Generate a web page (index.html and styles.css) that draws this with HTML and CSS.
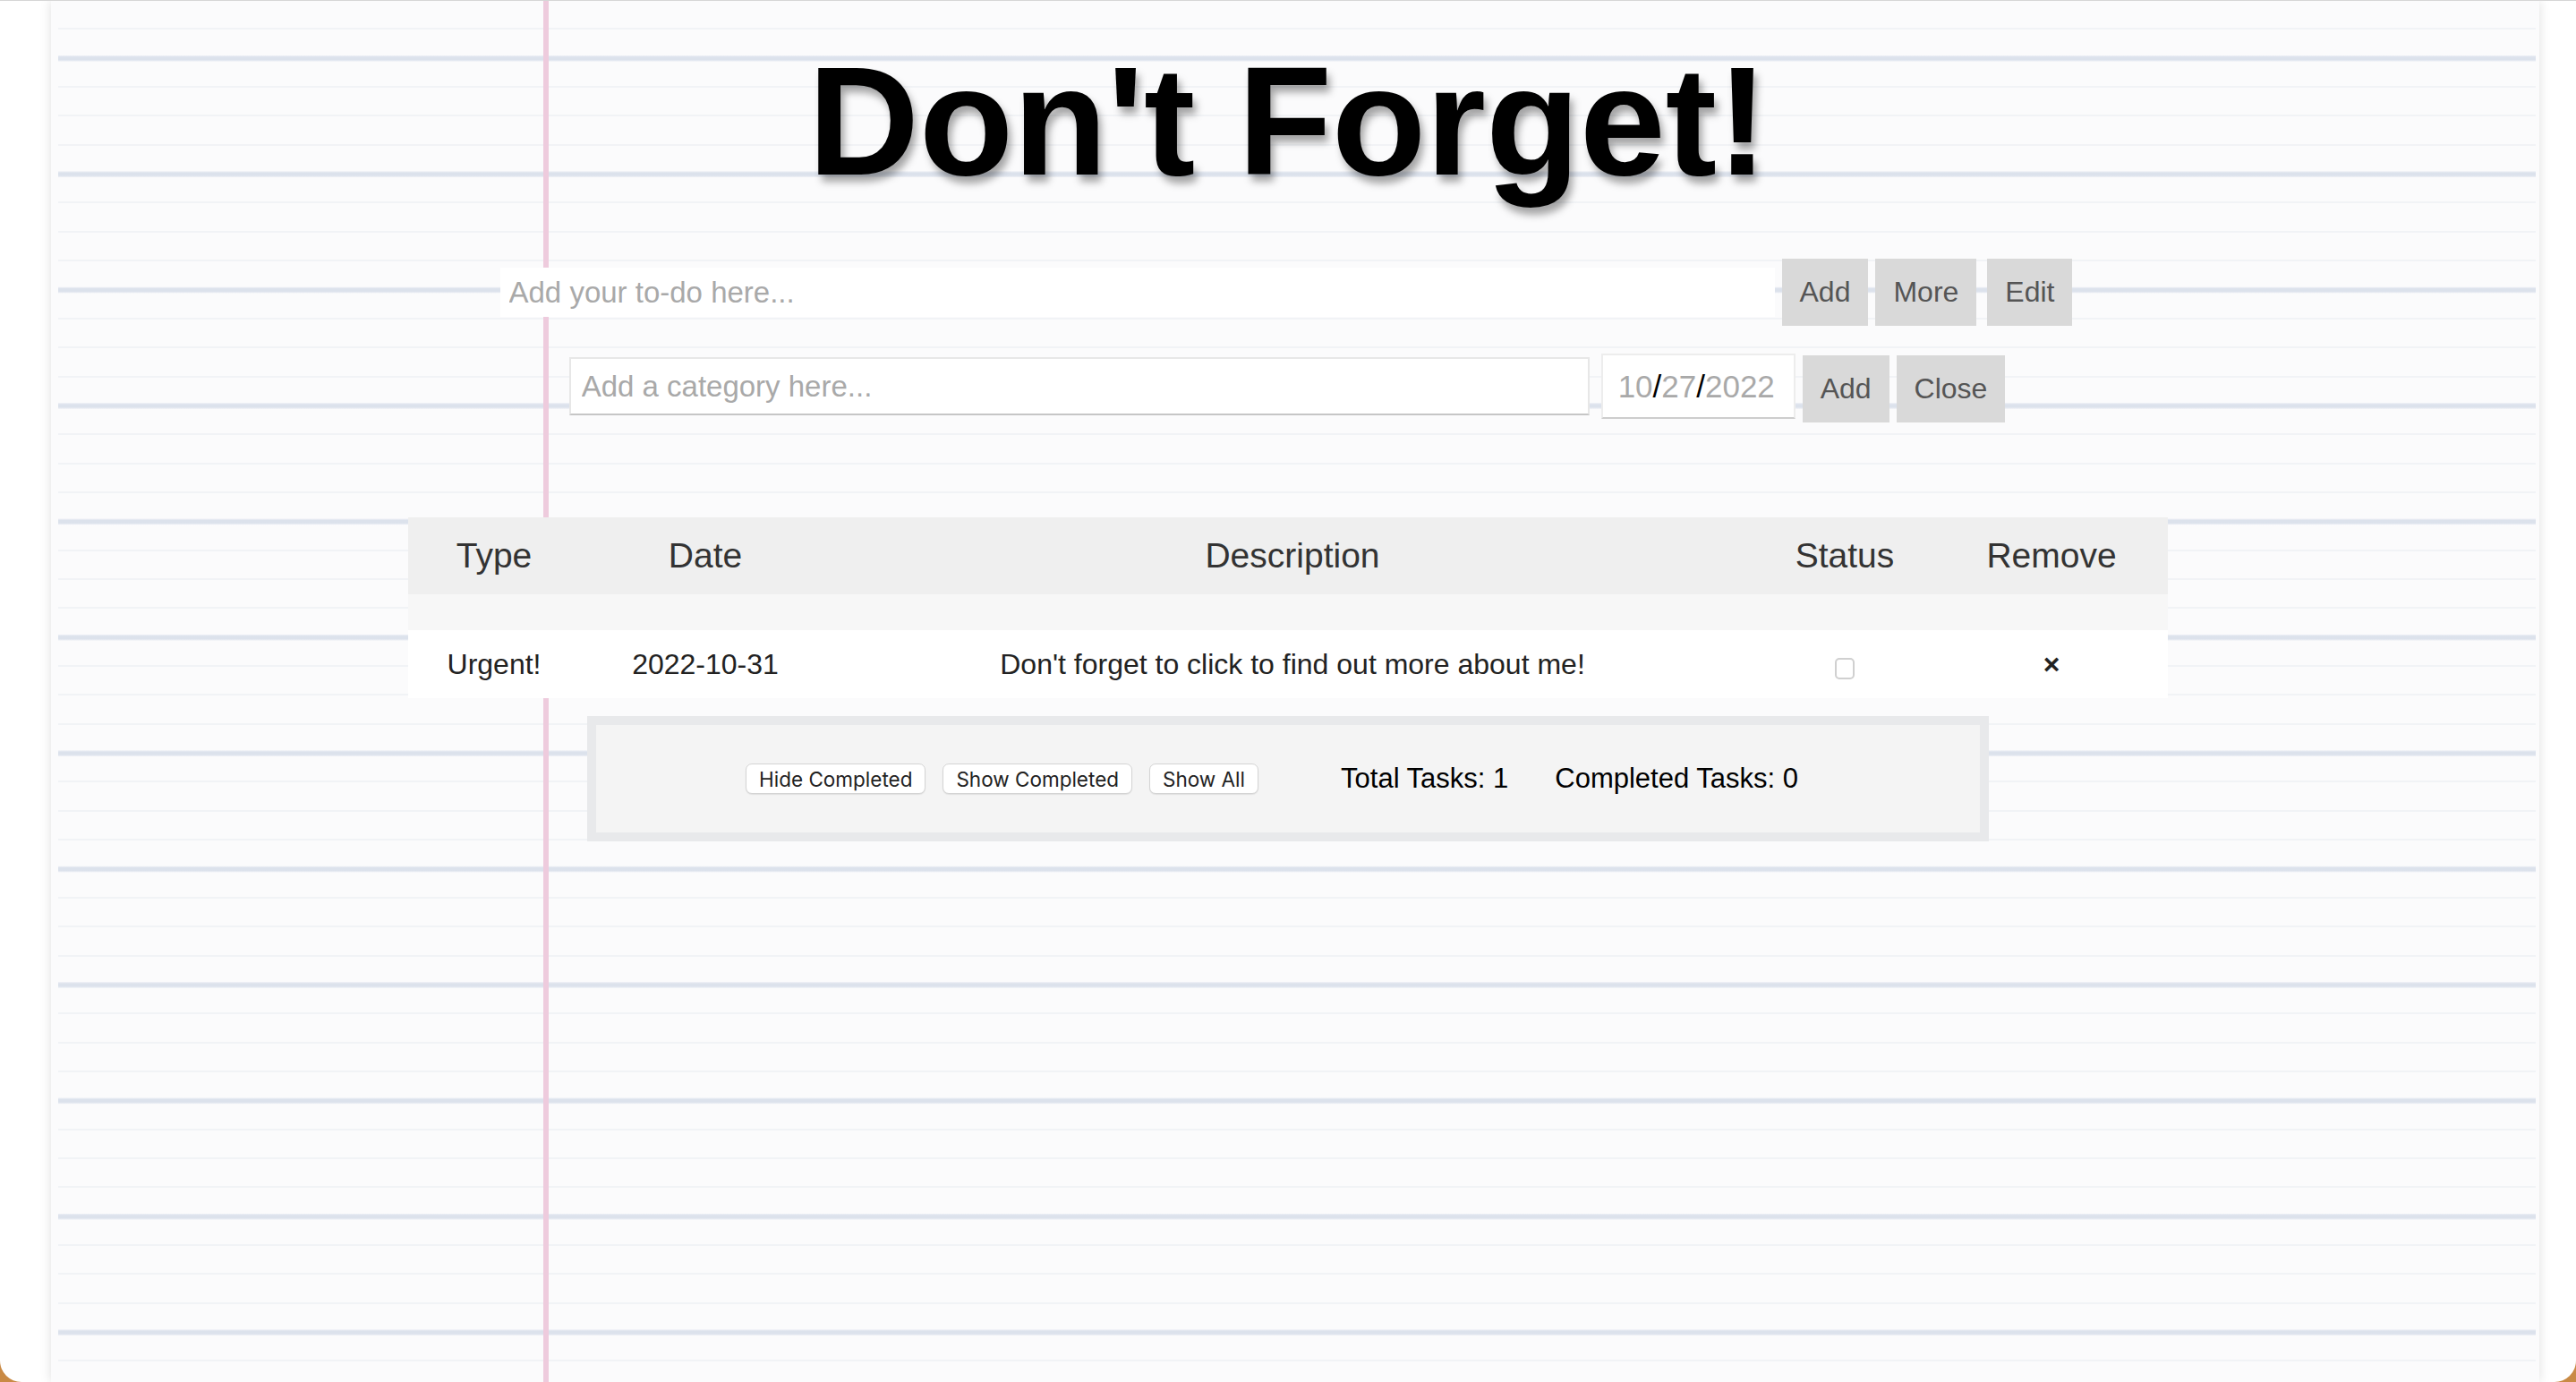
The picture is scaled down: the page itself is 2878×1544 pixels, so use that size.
FILE: index.html
```html
<!DOCTYPE html>
<html lang="en">
<head>
<meta charset="utf-8">
<title>Don't Forget!</title>
<link rel="stylesheet" href="styles.css">
</head>
<body>
<div class="paper">
  <div class="sheet">
    <h1 class="title">Don't Forget!</h1>

    <div class="entry-row">
      <input class="todo-input" type="text" placeholder="Add your to-do here...">
      <button class="btn">Add</button>
      <button class="btn">More</button>
      <button class="btn btn-edit">Edit</button>
    </div>

    <div class="entry-row entry-row-cat">
      <input class="cat-input" type="text" placeholder="Add a category here...">
      <div class="date-field"><span class="dpart">10</span><span class="dsep">/</span><span class="dpart">27</span><span class="dsep">/</span><span class="dpart">2022</span></div>
      <button class="btn btn-low">Add</button>
      <button class="btn btn-low">Close</button>
    </div>

    <table class="tasks">
      <colgroup>
        <col class="col-type">
        <col class="col-date">
        <col class="col-desc">
        <col class="col-status">
        <col class="col-remove">
      </colgroup>
      <thead>
        <tr>
          <th>Type</th>
          <th>Date</th>
          <th>Description</th>
          <th>Status</th>
          <th>Remove</th>
        </tr>
      </thead>
      <tbody>
        <tr class="spacer"><td colspan="5"></td></tr>
        <tr class="task">
          <td>Urgent!</td>
          <td>2022-10-31</td>
          <td>Don't forget to click to find out more about me!</td>
          <td><input class="check" type="checkbox"></td>
          <td class="remove">×</td>
        </tr>
      </tbody>
    </table>

    <div class="summary">
      <div class="filters">
        <button class="pill">Hide Completed</button>
        <button class="pill">Show Completed</button>
        <button class="pill">Show All</button>
      </div>
      <span class="stat stat-total">Total Tasks: 1</span>
      <span class="stat stat-done">Completed Tasks: 0</span>
    </div>
  </div>
</div>
</body>
</html>
```

FILE: styles.css
```css
html {
  background: #c98a45;
}

body {
  margin: 0;
  height: 1544px;
  box-sizing: border-box;
  border-top: 1px solid #d6d6d6;
  background: #ffffff;
  border-radius: 0 0 24px 24px;
  overflow: hidden;
  font-family: "Liberation Sans", Arial, Helvetica, sans-serif;
  color: #222;
}

.paper {
  margin-left: 57px;
  width: 2780px;
  height: 100%;
  box-sizing: border-box;
  padding: 0 4px 0 8px;
  background: #fbfbfc;
  box-shadow: 0 0 12px rgba(0, 0, 0, 0.13);
}

.sheet {
  height: 100%;
  box-sizing: border-box;
  padding-right: 20px;
  background-color: #fbfbfc;
  background-image:
    linear-gradient(to right, transparent 542px, #eecbdd 542px, #eecbdd 548px, transparent 548px),
    repeating-linear-gradient(to bottom, transparent 0, transparent 60.5px, rgba(218, 224, 236, 0.55) 61.5px, #dce2ec 62.8px, #dce2ec 65.6px, rgba(218, 224, 236, 0.55) 67px, transparent 68px, transparent 129.4px),
    repeating-linear-gradient(to bottom, transparent 0, transparent 30.35px, #f1f3f6 30.35px, #f1f3f6 32.35px);
}

.title {
  margin: 0;
  padding-top: 46px;
  font-size: 172px;
  line-height: 176px;
  font-weight: bold;
  text-align: center;
  color: #000;
  text-shadow: 4px 8px 8px rgba(0, 0, 0, 0.35);
}

.entry-row {
  display: flex;
  justify-content: center;
  align-items: center;
  gap: 8px;
  margin-top: 66px;
  padding-right: 4px;
}

.entry-row-cat {
  align-items: flex-start;
  margin-top: 31px;
  gap: 12px;
  padding-right: 2px;
}

.todo-input {
  width: 1424px;
  height: 55px;
  box-sizing: border-box;
  border: none;
  padding: 0 0 0 10px;
  margin: 0;
  background: #fff;
  font-family: "Liberation Sans", Arial, sans-serif;
  font-size: 33px;
  color: #222;
  outline: none;
}

.cat-input {
  width: 1140px;
  height: 65px;
  margin: 4px 1px 0 0;
  box-sizing: border-box;
  border: 2px solid #e7e7e7;
  border-bottom-color: #c6c6c6;
  padding: 0 0 0 12px;
  background: #fff;
  font-family: "Liberation Sans", Arial, sans-serif;
  font-size: 33px;
  color: #222;
  outline: none;
}

.todo-input::placeholder,
.cat-input::placeholder {
  color: #a9a9a9;
}

.date-field {
  width: 217px;
  height: 73px;
  box-sizing: border-box;
  border: 2px solid #ededed;
  border-bottom-color: #cdcdcd;
  background: #fff;
  display: flex;
  align-items: center;
  padding-left: 17px;
  font-size: 35px;
}

.dpart {
  color: #a9a9a9;
}

.dsep {
  color: #000;
}

.btn {
  height: 75px;
  padding: 0 20px;
  margin: 0;
  border: none;
  background: #d9d9d9;
  color: #555;
  font-family: "Liberation Sans", Arial, sans-serif;
  font-size: 32px;
  cursor: pointer;
}

.btn-edit {
  margin-left: 4px;
}

.btn-low {
  margin-top: 2px;
  margin-left: -4px;
}

.tasks {
  width: 1966px;
  margin: 106px auto 0;
  border-collapse: collapse;
  table-layout: fixed;
}

.col-type { width: 192px; }
.col-date { width: 280px; }
.col-desc { width: 1032px; }
.col-status { width: 202px; }
.col-remove { width: 260px; }

.tasks th {
  height: 86px;
  padding: 0;
  background: #efefef;
  font-weight: normal;
  font-size: 39px;
  color: #333;
  text-align: center;
}

.spacer td {
  height: 40px;
  padding: 0;
  background: #f7f7f7;
}

.task td {
  height: 76px;
  padding: 0;
  background: #fff;
  font-size: 32px;
  color: #222;
  text-align: center;
}

.check {
  appearance: none;
  -webkit-appearance: none;
  width: 22px;
  height: 24px;
  margin: 6px 0 0;
  box-sizing: border-box;
  border: 2px solid #d0d0d0;
  border-radius: 5px;
  background: #fff;
  vertical-align: middle;
}

.remove {
  font-size: 30px;
  font-weight: bold;
}

.summary {
  width: 1566px;
  height: 140px;
  box-sizing: border-box;
  margin: 20px auto 0;
  border: 10px solid #e8e9eb;
  background: #f4f4f4;
  display: flex;
  align-items: center;
  justify-content: center;
  padding-right: 36px;
}

.filters {
  display: flex;
  gap: 19px;
}

.pill {
  height: 34px;
  padding: 0 14px;
  margin: 0;
  border: 1px solid #d4d4d4;
  border-radius: 7px;
  background: #fff;
  box-shadow: 0 1px 1px rgba(0, 0, 0, 0.08);
  font-family: Inter, "Liberation Sans", sans-serif;
  font-size: 22.5px;
  color: #222;
}

.stat {
  font-size: 31px;
  color: #000;
}

.stat-total {
  margin-left: 92px;
}

.stat-done {
  margin-left: 52px;
}
```
